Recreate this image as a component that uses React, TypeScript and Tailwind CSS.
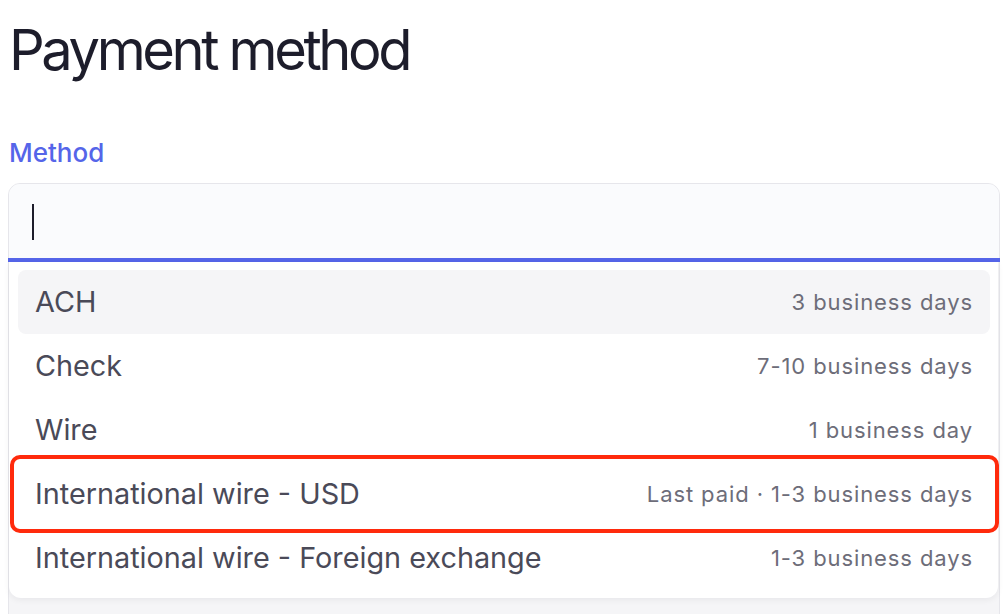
import React from "react";

const rows = [
  { name: "ACH", right: "3 business days", active: true },
  { name: "Check", right: "7-10 business days" },
  { name: "Wire", right: "1 business day" },
  { name: "International wire - USD", right: "Last paid · 1-3 business days", marked: true },
  { name: "International wire - Foreign exchange", right: "1-3 business days" },
];

export default function App() {
  return (
    <div className="w-[1008px] h-[614px] overflow-hidden bg-white font-['Inter',sans-serif]">
      <div className="pl-[9px] pt-[22px]">
        <h1 className="text-[56px] leading-none font-normal text-[#1d1d2b] tracking-[-3.4px]">Payment method</h1>
      </div>
      <div className="pl-[9px] mt-[62px]">
        <div className="text-[26px] leading-none font-medium text-[#5565e9]">Method</div>
      </div>
      <div className="ml-[8px] mt-[17px] w-[992px] h-[600px] border border-[#e6e6eb] rounded-t-[12px] bg-[#f5f5f7]">
        <div className="h-[74px] bg-[#fafbfd] rounded-t-[11px] pt-[20px] pl-[23px]">
          <div className="w-[2px] h-[36px] bg-[#1d1d2b]" />
        </div>
        <div className="h-[4px] bg-[#5565e9] -mx-px" />
        <div className="mr-[1px] bg-white rounded-b-[12px] pl-[9px] pr-[8px] py-[8px] shadow-[0_2px_6px_rgba(20,20,40,0.06)]">
          {rows.map((r) => (
            <div
              key={r.name}
              className={
                "relative h-[64px] flex items-center justify-between px-[17px] rounded-[8px] " +
                (r.active ? "bg-[#f5f5f7]" : "")
              }
            >
              <span className="text-[28.8px] text-[#4a4a58]">{r.name}</span>
              <span className="text-[22px] tracking-[0.9px] text-[#6d6d79]">{r.right}</span>
              {r.marked && (
                <div className="absolute -left-[8px] -right-[9px] -top-[7px] -bottom-[7px] border-[4px] border-[#ff2a0c] rounded-[10px] pointer-events-none" />
              )}
            </div>
          ))}
        </div>
      </div>
    </div>
  );
}
